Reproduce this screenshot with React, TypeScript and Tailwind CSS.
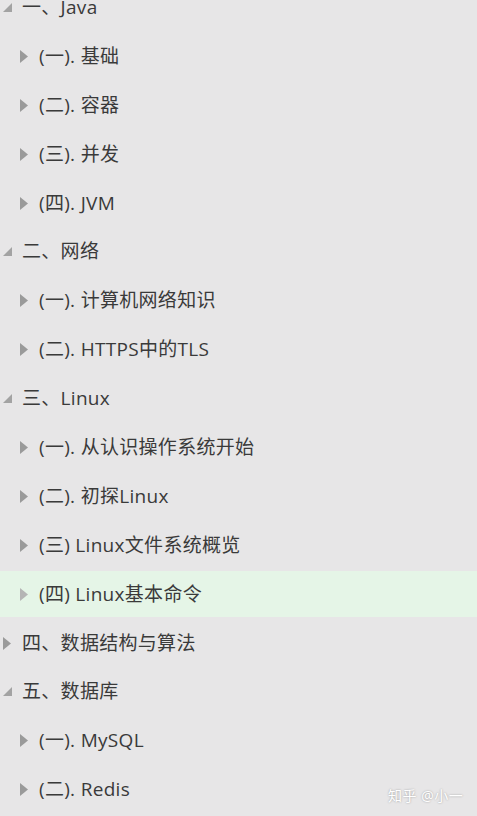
import React from "react";

type Row = { label: string; level: 0 | 1; open?: boolean; active?: boolean };

const rows: Row[] = [
  { label: "一、Java", level: 0, open: true },
  { label: "(一). 基础", level: 1 },
  { label: "(二). 容器", level: 1 },
  { label: "(三). 并发", level: 1 },
  { label: "(四). JVM", level: 1 },
  { label: "二、网络", level: 0, open: true },
  { label: "(一). 计算机网络知识", level: 1 },
  { label: "(二). HTTPS中的TLS", level: 1 },
  { label: "三、Linux", level: 0, open: true },
  { label: "(一). 从认识操作系统开始", level: 1 },
  { label: "(二). 初探Linux", level: 1 },
  { label: "(三) Linux文件系统概览", level: 1 },
  { label: "(四) Linux基本命令", level: 1, active: true },
  { label: "四、数据结构与算法", level: 0, open: false },
  { label: "五、数据库", level: 0, open: true },
  { label: "(一). MySQL", level: 1 },
  { label: "(二). Redis", level: 1 },
];

function OpenArrow() {
  return (
    <svg width="9" height="9" viewBox="0 0 9 9" className="shrink-0">
      <path d="M9 0 L9 9 L0 9 Z" fill="#a3a3a3" />
    </svg>
  );
}

function ClosedArrow({ light }: { light?: boolean }) {
  return (
    <svg width="8" height="13" viewBox="0 0 8 13" className="shrink-0">
      <path d="M0 0 L8 6.5 L0 13 Z" fill={light ? "#b5b5b5" : "#9a9a9a"} />
    </svg>
  );
}

export default function App() {
  return (
    <div
      className="relative w-[477px] h-[816px] overflow-hidden bg-[#e7e6e7] text-[#3a3a3a]"
      style={{ fontFamily: '"Open Sans", "Noto Sans CJK SC", sans-serif' }}
    >
      <div className="mt-[-17px] flex flex-col">
        {rows.map((r, i) => (
          <div key={i} className="h-[48.9px] flex items-center">
            <div
              className={`h-[46px] w-full flex items-center ${
                r.active ? "bg-[#e5f5e7]" : ""
              } ${r.level === 0 ? "pl-[3px]" : "pl-[20px]"}`}
            >
              <div className="w-[19px] flex items-center">
                {r.level === 0 && r.open ? <OpenArrow /> : <ClosedArrow light={r.active} />}
              </div>
              <span className="text-[19px] leading-none tracking-[0.3px] whitespace-pre">{r.label}</span>
            </div>
          </div>
        ))}
      </div>
      <div
        className="absolute left-[388px] top-[785px] text-[14px] text-white tracking-[0.5px]"
        style={{ textShadow: "0 0 2px rgba(0,0,0,0.35)" }}
      >
        知乎 @小一
      </div>
    </div>
  );
}
